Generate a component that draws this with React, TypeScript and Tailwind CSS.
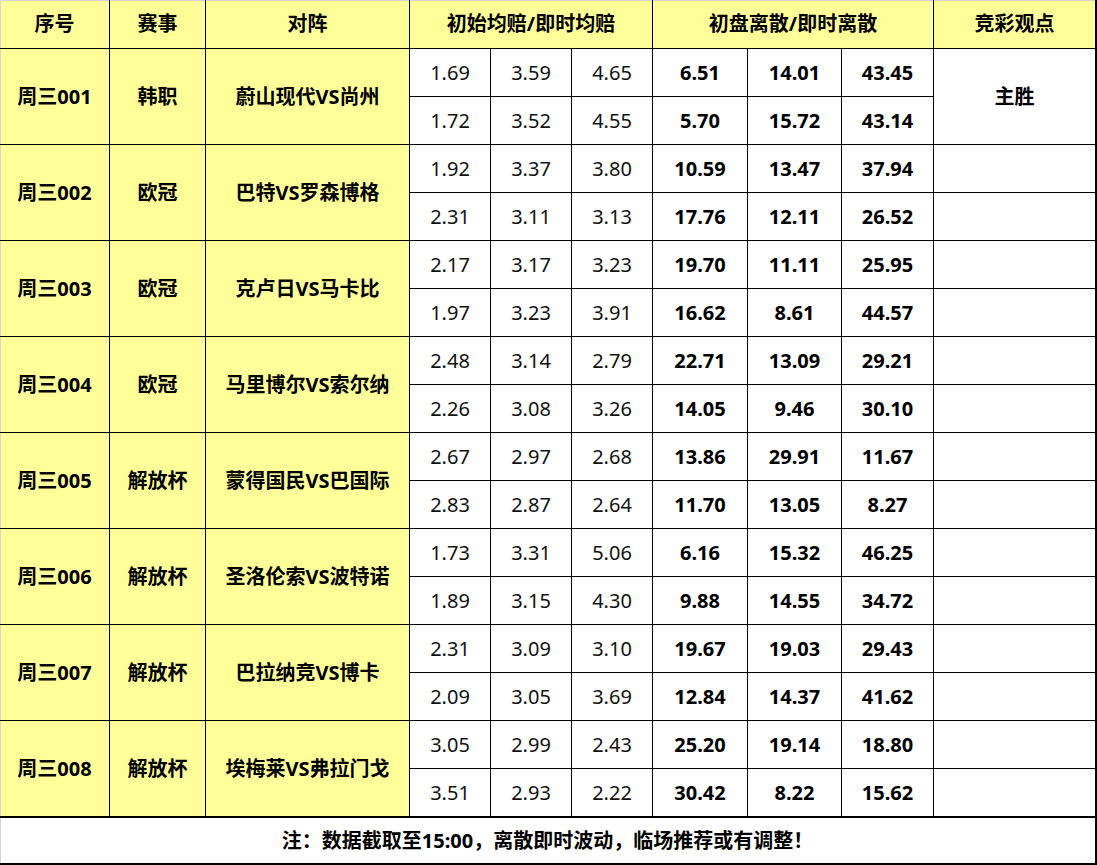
const rows = [
  { no: "周三001", league: "韩职", match: "蔚山现代VS尚州", a: [["1.69", "3.59", "4.65", "6.51", "14.01", "43.45"], ["1.72", "3.52", "4.55", "5.70", "15.72", "43.14"]], tip: "主胜" },
  { no: "周三002", league: "欧冠", match: "巴特VS罗森博格", a: [["1.92", "3.37", "3.80", "10.59", "13.47", "37.94"], ["2.31", "3.11", "3.13", "17.76", "12.11", "26.52"]] },
  { no: "周三003", league: "欧冠", match: "克卢日VS马卡比", a: [["2.17", "3.17", "3.23", "19.70", "11.11", "25.95"], ["1.97", "3.23", "3.91", "16.62", "8.61", "44.57"]] },
  { no: "周三004", league: "欧冠", match: "马里博尔VS索尔纳", a: [["2.48", "3.14", "2.79", "22.71", "13.09", "29.21"], ["2.26", "3.08", "3.26", "14.05", "9.46", "30.10"]] },
  { no: "周三005", league: "解放杯", match: "蒙得国民VS巴国际", a: [["2.67", "2.97", "2.68", "13.86", "29.91", "11.67"], ["2.83", "2.87", "2.64", "11.70", "13.05", "8.27"]] },
  { no: "周三006", league: "解放杯", match: "圣洛伦索VS波特诺", a: [["1.73", "3.31", "5.06", "6.16", "15.32", "46.25"], ["1.89", "3.15", "4.30", "9.88", "14.55", "34.72"]] },
  { no: "周三007", league: "解放杯", match: "巴拉纳竞VS博卡", a: [["2.31", "3.09", "3.10", "19.67", "19.03", "29.43"], ["2.09", "3.05", "3.69", "12.84", "14.37", "41.62"]] },
  { no: "周三008", league: "解放杯", match: "埃梅莱VS弗拉门戈", a: [["3.05", "2.99", "2.43", "25.20", "19.14", "18.80"], ["3.51", "2.93", "2.22", "30.42", "8.22", "15.62"]] },
];

const cell = "flex items-center justify-center border-r border-b border-black";

export default function App() {
  return (
    <div className="w-[1097px] h-[865px] bg-white text-black font-['Noto_Sans','Noto_Sans_CJK_SC',sans-serif]">
      <div className="grid grid-cols-[110px_96px_204px_81px_81px_81px_95px_94px_92px_163px] grid-rows-[49px_repeat(16,48px)_48px]">
        <div className={`${cell} bg-[#ffff99] font-bold text-[20px] shadow-[inset_1px_1px_0_#d4d4d4]`}>序号</div>
        <div className={`${cell} bg-[#ffff99] font-bold text-[20px] shadow-[inset_0_1px_0_#d4d4d4]`}>赛事</div>
        <div className={`${cell} bg-[#ffff99] font-bold text-[20px] shadow-[inset_0_1px_0_#d4d4d4]`}>对阵</div>
        <div className={`${cell} col-span-3 bg-[#ffff99] font-bold text-[20px] shadow-[inset_0_1px_0_#d4d4d4]`}>初始均赔/即时均赔</div>
        <div className={`${cell} col-span-3 bg-[#ffff99] font-bold text-[20px] shadow-[inset_0_1px_0_#d4d4d4]`}>初盘离散/即时离散</div>
        <div className="flex items-center justify-center border-r-2 border-b border-black bg-[#ffff99] font-bold text-[20px] shadow-[inset_0_1px_0_#d4d4d4]">竞彩观点</div>

        {rows.map((r, i) => (
          <Group key={i} row={r} />
        ))}

        <div className="col-span-10 flex items-center justify-center border-t border-r-2 border-b-2 border-black font-bold text-[20px] shadow-[inset_1px_0_0_#d4d4d4]">
          注：数据截取至15:00，离散即时波动，临场推荐或有调整！
        </div>
      </div>
    </div>
  );
}

function Group({ row }: { row: (typeof rows)[number] }) {
  return (
    <>
      <div className={`${cell} row-span-2 bg-[#ffff99] font-bold text-[20px] shadow-[inset_1px_0_0_#d4d4d4]`}>{row.no}</div>
      <div className={`${cell} row-span-2 bg-[#ffff99] font-bold text-[20px]`}>{row.league}</div>
      <div className={`${cell} row-span-2 bg-[#ffff99] font-bold text-[20px]`}>{row.match}</div>
      {row.a.map((vals, j) => (
        <Line key={j} vals={vals} tip={j === 0 ? row.tip : undefined} first={j === 0} merged={!!row.tip} />
      ))}
    </>
  );
}

function Line({ vals, tip, first, merged }: { vals: string[]; tip?: string; first: boolean; merged: boolean }) {
  return (
    <>
      {vals.map((v, k) => (
        <div key={k} className={`${cell} text-[20px] ${k >= 3 ? "font-bold" : "text-[#111]"}`}>
          {v}
        </div>
      ))}
      {merged ? (
        first && (
          <div className="row-span-2 flex items-center justify-center border-r-2 border-b border-black font-bold text-[20px]">{tip}</div>
        )
      ) : (
        <div className="border-r-2 border-b border-black" />
      )}
    </>
  );
}
